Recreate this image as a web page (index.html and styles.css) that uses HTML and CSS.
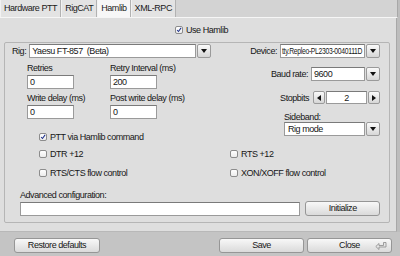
FILE: index.html
```html
<!DOCTYPE html>
<html>
<head>
<meta charset="utf-8">
<link rel="stylesheet" href="styles.css">
</head>
<body>
<div class="window">
  <div class="tabs">
    <div class="tab">Hardware PTT</div>
    <div class="tab">RigCAT</div>
    <div class="tab active">Hamlib</div>
    <div class="tab">XML-RPC</div>
  </div>
  <div class="panel">
    <div class="use-row">
      <label class="check"><span class="box on"><svg viewBox="0 0 8 8" width="8" height="8"><path d="M1.5 4 L3.3 6 L6.8 1.2" fill="none" stroke="#1c2f8a" stroke-width="1.4"/></svg></span>Use Hamlib</label>
    </div>
    <div class="group">
      <div class="row-top">
        <div class="field">
          <span class="lbl">Rig:</span>
          <div class="input rig">Yaesu FT-857&nbsp; (Beta)</div>
          <div class="dd"><i class="down"></i></div>
        </div>
        <div class="field">
          <span class="lbl">Device:</span>
          <div class="input dev"><span class="devtext">tty.Repleo-PL2303-0040111D</span></div>
          <div class="dd"><i class="down"></i></div>
        </div>
      </div>
      <div class="middle">
        <div class="left-col">
          <div class="num-grid">
            <div class="num"><div class="cap">Retries</div><div class="input small">0</div></div>
            <div class="num"><div class="cap">Retry Interval (ms)</div><div class="input small">200</div></div>
            <div class="num"><div class="cap">Write delay (ms)</div><div class="input small">0</div></div>
            <div class="num"><div class="cap">Post write delay (ms)</div><div class="input small">0</div></div>
          </div>
          <label class="check ptt"><span class="box on"><svg viewBox="0 0 8 8" width="8" height="8"><path d="M1.5 4 L3.3 6 L6.8 1.2" fill="none" stroke="#1c2f8a" stroke-width="1.4"/></svg></span>PTT via Hamlib command</label>
        </div>
        <div class="right-col">
          <div class="rfield baud">
            <span class="lbl">Baud rate:</span>
            <div class="input baudin">9600</div>
            <div class="dd"><i class="down"></i></div>
          </div>
          <div class="rfield stop">
            <span class="lbl">Stopbits</span>
            <div class="arrow"><i class="left"></i></div>
            <div class="input spin">2</div>
            <div class="arrow"><i class="right"></i></div>
          </div>
          <div class="side">
            <div class="cap">Sideband:</div>
            <div class="rfield">
              <div class="input sidein">Rig mode</div>
              <div class="dd"><i class="down"></i></div>
            </div>
          </div>
        </div>
      </div>
      <div class="checks">
        <label class="check"><span class="box"></span>DTR +12</label>
        <label class="check"><span class="box"></span>RTS +12</label>
        <label class="check"><span class="box"></span>RTS/CTS flow control</label>
        <label class="check"><span class="box"></span>XON/XOFF flow control</label>
      </div>
      <div class="advanced">
        <div class="cap">Advanced configuration:</div>
        <div class="adv-row">
          <div class="input adv"></div>
          <div class="btn init">Initialize</div>
        </div>
      </div>
    </div>
  </div>
  <div class="footer">
    <div class="btn restore">Restore defaults</div>
    <div class="spacer"></div>
    <div class="btn save">Save</div>
    <div class="btn close">Close<svg class="ret" viewBox="0 0 12 8" width="12" height="8"><path d="M8.5 0.5 H11 V5 H4 V7.5 L0.8 4.5 L4 1.5 V3.5 H8.5 Z" fill="#e6e6e6" stroke="#8a8a8a" stroke-width="0.8"/></svg></div>
  </div>
</div>
</body>
</html>
```

FILE: styles.css
```css
html, body {
  margin: 0;
  padding: 0;
}
body {
  width: 400px;
  height: 256px;
  overflow: hidden;
  background: #bdbdbd;
  font-family: "Liberation Sans", Arial, sans-serif;
  font-size: 9px;
  letter-spacing: -0.45px;
  color: #161616;
}
.window {
  display: flex;
  flex-direction: column;
  height: 256px;
}
.tabs {
  display: flex;
  height: 17px;
  background: #d3d3d3;
  border-bottom: 1px solid #f6f6f6;
  width: 397px;
  border-right: 1px solid #a8a8a8;
}
.tab {
  padding: 0 3px;
  line-height: 17px;
  background: #e3e3e3;
  border-right: 1px solid #b2b2b2;
  border-left: 1px solid #f2f2f2;
  color: #1a1a1a;
}
.tab.active {
  background: #f7f7f7;
}
.panel {
  width: 397px;
  height: 214px;
  background: #dedede;
  border-right: 1px solid #a8a8a8;
  border-bottom: 1px solid #b8b8b8;
  box-sizing: border-box;
  padding-left: 4px;
  display: flex;
  flex-direction: column;
}
.use-row {
  height: 24px;
  display: flex;
  justify-content: center;
  align-items: center;
  padding-left: 3px;
}
.check {
  display: flex;
  align-items: center;
  gap: 3px;
  white-space: nowrap;
}
.box {
  width: 8px;
  height: 8px;
  box-sizing: border-box;
  border: 1px solid #8c8c8c;
  border-radius: 2px;
  background: linear-gradient(#ffffff, #ececec);
  display: inline-flex;
  align-items: center;
  justify-content: center;
}
.box svg {
  display: block;
}
.group {
  width: 386px;
  height: 181px;
  box-sizing: border-box;
  border: 1px solid #b5b5b5;
  border-radius: 2px;
  padding: 1px 9px 0 7px;
  display: flex;
  flex-direction: column;
}
.row-top {
  display: flex;
  justify-content: space-between;
  height: 14px;
}
.field, .rfield {
  display: flex;
  align-items: center;
}
.lbl {
  margin-right: 3px;
}
.input {
  box-sizing: border-box;
  height: 14px;
  background: #fff;
  border: 1px solid #9a9a9a;
  border-top-color: #7a7a7a;
  padding-left: 2px;
  line-height: 12px;
  white-space: nowrap;
  overflow: hidden;
}
.rig { width: 167px; }
.dev {
  width: 85px;
  padding-left: 1px;
}
.devtext {
  display: inline-block;
  font-size: 8.5px;
  letter-spacing: -0.4px;
  transform: scaleX(0.8);
  transform-origin: left center;
}
.dd, .arrow {
  box-sizing: border-box;
  width: 14px;
  height: 14px;
  margin-left: 1px;
  border: 1px solid #9a9a9a;
  border-radius: 2px;
  background: linear-gradient(#fafafa, #d6d6d6);
  display: flex;
  align-items: center;
  justify-content: center;
}
.down {
  width: 0;
  height: 0;
  border-left: 3.5px solid transparent;
  border-right: 3.5px solid transparent;
  border-top: 4px solid #111;
}
.left {
  width: 0; height: 0;
  border-top: 3.5px solid transparent;
  border-bottom: 3.5px solid transparent;
  border-right: 4px solid #111;
}
.right {
  width: 0; height: 0;
  border-top: 3.5px solid transparent;
  border-bottom: 3.5px solid transparent;
  border-left: 4px solid #111;
}
.middle {
  display: flex;
  justify-content: space-between;
  margin-top: 3px;
}
.left-col {
  padding-left: 15px;
  display: flex;
  flex-direction: column;
}
.num-grid {
  display: grid;
  grid-template-columns: 83px 83px;
  row-gap: 2px;
}
.cap {
  height: 14px;
  line-height: 14px;
}
.small { width: 47px; }
.ptt {
  margin-top: 13px;
  margin-left: 12px;
}
.right-col {
  display: flex;
  flex-direction: column;
  align-items: flex-end;
  width: 110px;
}
.baud { margin-top: 6px; }
.baudin { width: 54px; }
.stop { margin-top: 10px; }
.stop .lbl { margin-right: 4px; }
.stop .arrow { width: 12px; height: 13px; margin-left: 0; }
.spin {
  width: 41px;
  height: 13px;
  text-align: center;
  margin: 0 1px;
  padding: 0;
}
.side {
  margin-top: 8px;
  width: 96px;
}
.side .cap {
  height: 10px;
  line-height: 10px;
}
.sidein { width: 81px; padding-left: 3px; }
.checks {
  display: grid;
  grid-template-columns: 191px auto;
  row-gap: 9px;
  margin-top: 7px;
  padding-left: 27px;
}
.advanced {
  margin-top: 13px;
  padding-left: 8px;
}
.advanced .cap {
  height: 9px;
  line-height: 9px;
}
.adv-row {
  display: flex;
  align-items: center;
  gap: 5px;
}
.adv {
  width: 282px;
  margin-top: 2px;
}
.btn {
  box-sizing: border-box;
  height: 15px;
  border: 1px solid #969696;
  border-radius: 3px;
  background: linear-gradient(#f8f8f8, #dadada);
  display: flex;
  align-items: center;
  justify-content: center;
  position: relative;
}
.init { width: 75px; }
.footer {
  flex: 1;
  display: flex;
  align-items: center;
  padding: 2px 8px 0 14px;
  background: #c4c4c4;
}
.spacer { flex: 1; }
.restore { width: 86px; }
.save { width: 85px; }
.close { width: 85px; margin-left: 3px; }
.ret {
  position: absolute;
  right: 4px;
  top: 3px;
}
```
